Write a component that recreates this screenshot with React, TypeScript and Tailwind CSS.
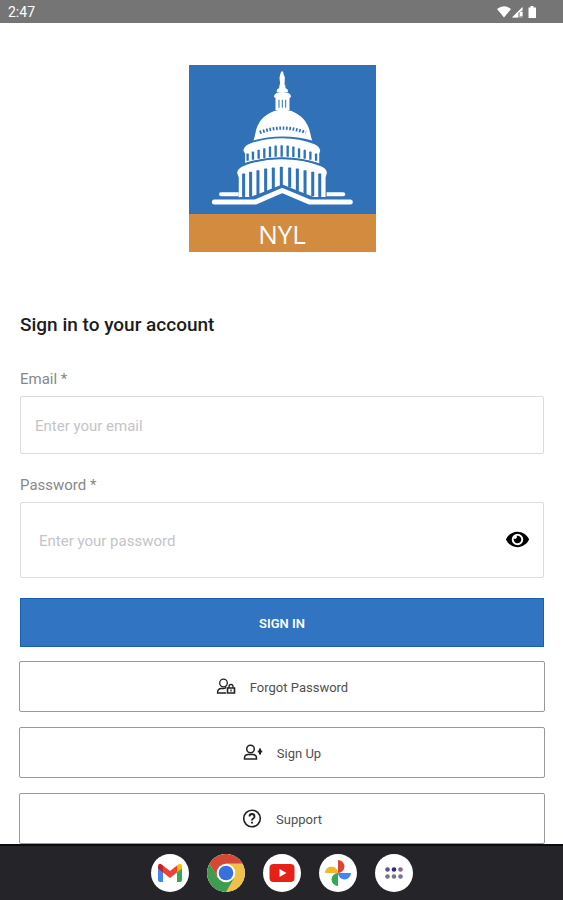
import { useState } from "react";
import type { ReactNode } from "react";
import { FaEye, FaEyeSlash } from "react-icons/fa";

const dome = "#fdfeff";
const sky = "#3071b8";

// slots between the columns of the two drums: [x, top, bottom]
const upperSlots = [
    [197, 292, 314], [213, 286, 311], [230, 281, 308], [247, 276, 306], [264, 271, 303], [281, 268, 302],
    [299, 267, 302], [317, 268, 302], [334, 271, 303], [351, 276, 305], [368, 281, 308], [385, 286, 311], [402, 292, 314],
];
const lowerSlots = [
    [184, 352, 422], [205, 347, 422], [227, 342, 417], [250, 337, 407], [273, 334, 398], [297, 332, 388],
    [322, 334, 394], [345, 337, 404], [368, 342, 414], [391, 347, 420], [412, 352, 422],
];

function Capitol() {
    return (
        <svg viewBox="25 27 560 446" className="block w-full" aria-hidden="true">
            <g fill={dome}>
                <path d="M299 52q2-7 6-6 4 3 3 8l4 10-1 22h2l1 10 7 5v7h-33v-7l7-5 1-10 2-1-2-20z" />
                <path d="M279 121q3-13 26-13t26 13l-4 5H283z" />
                <path d="M284 124H326V162H284z" />
                <path d="M218 253q4-10 6-22 8-48 56-66 25-8 52 0 46 18 56 66 2 12 6 22-42-12-89-12t-87 12z" />
                <path d="M188 284q1-14 15-20 46-18 101-18t97 18q15 6 17 20l-3 9v29q-50-17-111-17t-111 17v-29z" />
                <path d="M169 350q2-14 18-20 52-21 117-21t116 21q17 6 18 20l-4 14v60h-32l-98-39-99 39h-31v-60z" />
                <path d="M115 413q0-5 5-5h54v12h-54q-5 0-5-7z" />
                <path d="M437 408h50q6 0 6 6t-6 6h-50z" />
            </g>
            <g fill={sky}>
                {upperSlots.map(([x, top, bottom]) => (
                    <rect key={x} x={x} y={top} width="7" height={bottom - top} rx="2" />
                ))}
                {lowerSlots.map(([x, top, bottom]) => (
                    <rect key={x} x={x} y={top} width="9" height={bottom - top} rx="2" />
                ))}
                <path d="M293 131h3v24h-3zM303 131h3v24h-3zM313 131h3v24h-3z" />
            </g>
            <path d="M237 229q68-26 138 0" fill="none" stroke={sky} strokeWidth="10" strokeDasharray="5 5" />
            <path d="M188 324q116-37 228 0" fill="none" stroke={sky} strokeWidth="4" />
            <path d="M176 427h44l84-36 86 36h48" fill="none" stroke={sky} strokeWidth="10" />
            <path d="M101 437h124l79-34 81 34h123" fill="none" stroke={dome} strokeWidth="15" strokeLinecap="round" strokeLinejoin="round" />
        </svg>
    );
}

function Logo() {
    return (
        <div className="mx-auto w-[187px] bg-[#3071b8]" role="img" aria-label="NYL">
            <Capitol />
            <div className="flex h-[38px] items-center justify-center bg-[#d38b40] pt-0.5 font-['Open_Sans',sans-serif] text-[26px] leading-8 text-white">
                NYL
            </div>
        </div>
    );
}

function StatusBar() {
    return (
        <header className="flex h-[23px] items-center justify-between bg-[#757575] pr-6 pl-2 text-sm text-white">
            <span>2:47</span>
            <svg viewBox="0 0 42 14" className="h-3.5 w-[42px]" fill="#fff" aria-hidden="true">
                <path d="M0 4Q7-1.500 14 4L7 12.500z" />
                <path d="M15 12.500L25.500 2v10.500z" fillOpacity=".45" />
                <path d="M15 12.500L25.500 2v3L21 8v4.500zM23 7h2.500v4H23z" />
                <path d="M33.500 1h3v1.500H39v10.500h-7.500V2.500h2z" />
            </svg>
        </header>
    );
}

function OutlineButton({ icon, children }: { icon: ReactNode; children: ReactNode }) {
    return (
        <button
            type="button"
            className="flex h-[51px] items-center justify-center gap-3.5 rounded-xs border border-[#999] pt-0.5 text-[13px] text-[#505050]"
        >
            {icon}
            {children}
        </button>
    );
}

function UserLockIcon() {
    return (
        <svg viewBox="0 0 20 20" className="size-5" fill="none" stroke="#222" strokeWidth="1.300" aria-hidden="true">
            <circle cx="7.500" cy="6" r="3.800" />
            <path d="M10 16H1.500q0-4.500 4-4.500H8q1.500 0 2-1.500" />
            <path d="M11.500 11h7v5h-7z" strokeWidth="1.600" />
            <path d="M13 11V9.500q0-2 2-2t2 2V11M15 12.500v2" />
        </svg>
    );
}

function UserPlusIcon() {
    return (
        <svg viewBox="0 0 20 20" className="size-5" fill="none" stroke="#222" strokeWidth="1.500" aria-hidden="true">
            <circle cx="7.500" cy="6" r="3.800" />
            <path d="M1.500 16v-1q0-3.500 4-3.500h4q4 0 4 3.500v1z" />
            <path d="M17 5.500v6M14.800 8.500h4.400" strokeWidth="2" />
        </svg>
    );
}

function HelpIcon() {
    return (
        <svg viewBox="0 0 20 20" className="size-5" fill="none" stroke="#222" strokeWidth="1.600" aria-hidden="true">
            <circle cx="10" cy="9.500" r="8.300" />
            <path d="M7.500 7.500q0-2.500 2.500-2.500t2.500 2.500q0 1.200-1.300 2-1.200.700-1.200 2M10 12.800v1.700" strokeWidth="1.900" />
        </svg>
    );
}

function GmailIcon() {
    return (
        <svg viewBox="0 0 38 38" className="size-full" aria-hidden="true">
            <path d="M7 12.500l5 4V28H9q-2 0-2-2z" fill="#4285f4" />
            <path d="M31 12.500l-5 4V28h3q2 0 2-2z" fill="#34a853" />
            <path d="M26 11.500l2-1.500q3-1 3 2.500v2l-5 4z" fill="#fbbc04" />
            <path d="M12 11.500L10 10q-3-1-3 2.500v2l5 4z" fill="#c5221f" />
            <path d="M12 11.500l7 5.500 7-5.500v7L19 24l-7-5.500z" fill="#ea4335" />
        </svg>
    );
}

function ChromeIcon() {
    return (
        <svg viewBox="0 0 38 38" className="size-full" aria-hidden="true">
            <circle cx="19" cy="19" r="19" fill="#f0c04c" />
            <path d="M2.500 9.500A19 19 0 0 1 35.500 9.500H19L10.800 23.700z" fill="#d34836" />
            <path d="M2.500 9.500A19 19 0 0 0 19 38L27.200 23.700H10.800z" fill="#3f9b50" />
            <circle cx="19" cy="19" r="9.300" fill="#fff" />
            <circle cx="19" cy="19" r="7.300" fill="#3870df" />
        </svg>
    );
}

function YoutubeIcon() {
    return (
        <svg viewBox="0 0 38 38" className="size-full" aria-hidden="true">
            <rect x="6.500" y="10" width="25" height="18" rx="4" fill="#e62117" />
            <path d="M16.500 15v8l7-4z" fill="#fff" />
        </svg>
    );
}

function PhotosIcon() {
    return (
        <svg viewBox="0 0 38 38" className="size-full" aria-hidden="true">
            <path d="M19 6a6.500 6.500 0 0 1 0 13z" fill="#dc4437" />
            <path d="M32 19a6.500 6.500 0 0 1-13 0z" fill="#4285f4" />
            <path d="M19 32a6.500 6.500 0 0 1 0-13z" fill="#34a853" />
            <path d="M6 19a6.500 6.500 0 0 1 13 0z" fill="#f0b92c" />
        </svg>
    );
}

function AppsIcon() {
    return (
        <svg viewBox="0 0 38 38" className="size-full" aria-hidden="true">
            <g fill="#77738a">
                <circle cx="12.500" cy="15.500" r="2.300" fill="#5b5490" />
                <circle cx="19" cy="15.500" r="2.300" fill="#2f2a86" />
                <circle cx="25.500" cy="15.500" r="2.300" fill="#8b6684" />
                <circle cx="12.500" cy="22.500" r="2.300" />
                <circle cx="19" cy="22.500" r="2.300" />
                <circle cx="25.500" cy="22.500" r="2.300" />
            </g>
        </svg>
    );
}

const apps = [
    { name: "Gmail", icon: <GmailIcon /> },
    { name: "Chrome", icon: <ChromeIcon /> },
    { name: "YouTube", icon: <YoutubeIcon /> },
    { name: "Photos", icon: <PhotosIcon /> },
    { name: "All apps", icon: <AppsIcon /> },
];

export default function App() {
    const [visible, setVisible] = useState(false);

    return (
        <div className="flex min-h-screen flex-col bg-white font-[Roboto,sans-serif]">
            <StatusBar />

            <main className="flex-1 pt-[42px] pr-[19px] pl-5">
                <Logo />

                <form className="mt-[61px] flex flex-col" onSubmit={(e) => e.preventDefault()}>
                    <h1 className="text-[19px] leading-6 font-medium text-[#1c1c20]">Sign in to your account</h1>

                    <label htmlFor="email" className="mt-[31px] text-[15px] leading-[22px] text-[#888]">
                        Email *
                    </label>
                    <input
                        id="email"
                        type="email"
                        placeholder="Enter your email"
                        className="mt-1.5 h-[58px] rounded-xs border border-[#dcdcdc] px-3.5 pt-0.5 text-[15px] placeholder:text-[#c4c4c8]"
                    />

                    <label htmlFor="password" className="mt-5 text-[15px] leading-[22px] text-[#888]">
                        Password *
                    </label>
                    <div className="mt-1.5 flex h-[76px] items-center rounded-xs border border-[#dcdcdc] pr-3.5 pl-[18px]">
                        <input
                            id="password"
                            type={visible ? "text" : "password"}
                            placeholder="Enter your password"
                            className="h-full min-w-0 flex-1 pt-0.5 text-[15px] outline-none placeholder:text-[#c4c4c8]"
                        />
                        <button type="button" aria-label="Show password" onClick={() => setVisible(!visible)}>
                            {visible ? <FaEyeSlash size={23} /> : <FaEye size={23} />}
                        </button>
                    </div>

                    <button type="submit" className="mt-5 h-[49px] border border-[#1660b4] bg-[#3174c2] pt-0.5 text-[13px] font-semibold text-white">
                        SIGN IN
                    </button>

                    <div className="-mx-px mt-3.5 flex flex-col gap-[15px]">
                        <OutlineButton icon={<UserLockIcon />}>Forgot Password</OutlineButton>
                        <OutlineButton icon={<UserPlusIcon />}>Sign Up</OutlineButton>
                        <OutlineButton icon={<HelpIcon />}>Support</OutlineButton>
                    </div>
                </form>
            </main>

            <nav className="flex h-14 items-center justify-center gap-[18px] border-t-2 border-[#0c0c0e] bg-[#242429]">
                {apps.map((app) => (
                    <button key={app.name} type="button" aria-label={app.name} className="size-[38px] overflow-hidden rounded-full bg-white">
                        {app.icon}
                    </button>
                ))}
            </nav>
        </div>
    );
}
